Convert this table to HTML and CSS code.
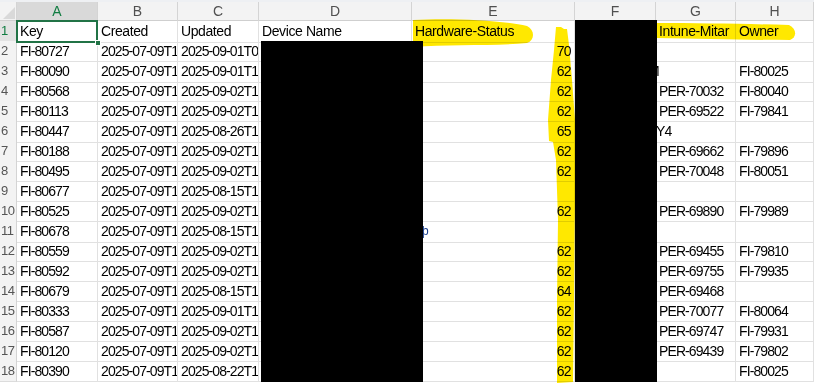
FILE: index.html
```html
<!DOCTYPE html>
<html>
<head>
<meta charset="utf-8">
<link rel="stylesheet" href="styles.css">
</head>
<body>
<div class="sheet">
  <div class="topband"></div>
  <div class="row colhead">
    <div class="corner"><svg width="17" height="19" viewBox="0 0 17 19"><polygon points="15,5 15,17 3,17" fill="#d9d9d9"/></svg></div>
    <div class="ch sel">A</div><div class="ch">B</div><div class="ch">C</div><div class="ch">D</div><div class="ch">E</div><div class="ch">F</div><div class="ch">G</div><div class="ch">H</div>
  </div>
  <div class="row head"><div class="rh sel">1</div><div class="c active">Key<span class="handle"></span></div><div class="c">Created</div><div class="c">Updated</div><div class="c">Device Name</div><div class="c">Hardware-Status</div><div class="c"></div><div class="c">Intune-Mitar</div><div class="c">Owner</div></div>
  <div class="row"><div class="rh">2</div><div class="c">FI-80727</div><div class="c">2025-07-09T1</div><div class="c">2025-09-01T0</div><div class="c"></div><div class="c num">70</div><div class="c"></div><div class="c"></div><div class="c"></div></div>
  <div class="row"><div class="rh">3</div><div class="c">FI-80090</div><div class="c">2025-07-09T1</div><div class="c">2025-09-01T1</div><div class="c"></div><div class="c num">62</div><div class="c"></div><div class="c shift-m">M</div><div class="c">FI-80025</div></div>
  <div class="row"><div class="rh">4</div><div class="c">FI-80568</div><div class="c">2025-07-09T1</div><div class="c">2025-09-02T1</div><div class="c"></div><div class="c num">62</div><div class="c"></div><div class="c">PER-70032</div><div class="c">FI-80040</div></div>
  <div class="row"><div class="rh">5</div><div class="c">FI-80113</div><div class="c">2025-07-09T1</div><div class="c">2025-09-02T1</div><div class="c"></div><div class="c num">62</div><div class="c"></div><div class="c">PER-69522</div><div class="c">FI-79841</div></div>
  <div class="row"><div class="rh">6</div><div class="c">FI-80447</div><div class="c">2025-07-09T1</div><div class="c">2025-08-26T1</div><div class="c"></div><div class="c num">65</div><div class="c"></div><div class="c shift-y">Y4</div><div class="c"></div></div>
  <div class="row"><div class="rh">7</div><div class="c">FI-80188</div><div class="c">2025-07-09T1</div><div class="c">2025-09-02T1</div><div class="c"></div><div class="c num">62</div><div class="c"></div><div class="c">PER-69662</div><div class="c">FI-79896</div></div>
  <div class="row"><div class="rh">8</div><div class="c">FI-80495</div><div class="c">2025-07-09T1</div><div class="c">2025-09-02T1</div><div class="c"></div><div class="c num">62</div><div class="c"></div><div class="c">PER-70048</div><div class="c">FI-80051</div></div>
  <div class="row"><div class="rh">9</div><div class="c">FI-80677</div><div class="c">2025-07-09T1</div><div class="c">2025-08-15T1</div><div class="c"></div><div class="c num"></div><div class="c"></div><div class="c"></div><div class="c"></div></div>
  <div class="row"><div class="rh">10</div><div class="c">FI-80525</div><div class="c">2025-07-09T1</div><div class="c">2025-09-02T1</div><div class="c"></div><div class="c num">62</div><div class="c"></div><div class="c">PER-69890</div><div class="c">FI-79989</div></div>
  <div class="row"><div class="rh">11</div><div class="c">FI-80678</div><div class="c">2025-07-09T1</div><div class="c">2025-08-15T1</div><div class="c"></div><div class="c spill">þ</div><div class="c"></div><div class="c"></div><div class="c"></div></div>
  <div class="row"><div class="rh">12</div><div class="c">FI-80559</div><div class="c">2025-07-09T1</div><div class="c">2025-09-02T1</div><div class="c"></div><div class="c num">62</div><div class="c"></div><div class="c">PER-69455</div><div class="c">FI-79810</div></div>
  <div class="row"><div class="rh">13</div><div class="c">FI-80592</div><div class="c">2025-07-09T1</div><div class="c">2025-09-02T1</div><div class="c"></div><div class="c num">62</div><div class="c"></div><div class="c">PER-69755</div><div class="c">FI-79935</div></div>
  <div class="row"><div class="rh">14</div><div class="c">FI-80679</div><div class="c">2025-07-09T1</div><div class="c">2025-08-15T1</div><div class="c"></div><div class="c num">64</div><div class="c"></div><div class="c">PER-69468</div><div class="c"></div></div>
  <div class="row"><div class="rh">15</div><div class="c">FI-80333</div><div class="c">2025-07-09T1</div><div class="c">2025-09-01T1</div><div class="c"></div><div class="c num">62</div><div class="c"></div><div class="c">PER-70077</div><div class="c">FI-80064</div></div>
  <div class="row"><div class="rh">16</div><div class="c">FI-80587</div><div class="c">2025-07-09T1</div><div class="c">2025-09-02T1</div><div class="c"></div><div class="c num">62</div><div class="c"></div><div class="c">PER-69747</div><div class="c">FI-79931</div></div>
  <div class="row"><div class="rh">17</div><div class="c">FI-80120</div><div class="c">2025-07-09T1</div><div class="c">2025-09-02T1</div><div class="c"></div><div class="c num">62</div><div class="c"></div><div class="c">PER-69439</div><div class="c">FI-79802</div></div>
  <div class="row"><div class="rh">18</div><div class="c">FI-80390</div><div class="c">2025-07-09T1</div><div class="c">2025-08-22T1</div><div class="c"></div><div class="c num">62</div><div class="c"></div><div class="c"></div><div class="c">FI-80025</div></div>

  <svg class="marker" width="814" height="385" viewBox="0 0 814 385">
    <g fill="#ffe800">
      <path d="M413,20 C450,18 500,20 527,26 C535,30 535,40 527,43 C495,46 450,44 413,47 Z"/>
      <path d="M656,23 C700,23 750,24 789,25 C797,29 797,37 790,40 C750,40 700,39 656,38 Z"/>
      <path d="M556,27 L561,27 L564,29 L567,29 L569,45 L572,80 L575,120 L575,200 L574,300 L573,382 L557,383 L557,300 L558,220 L556,160 L553,142 L549,141 L548,120 L551,80 L554,50 Z"/>
    </g>
  </svg>
  <div class="redact r-device"></div>
  <div class="redact r-col-f"></div>
</div>
</body>
</html>
```
FILE: styles.css
```css
* { box-sizing: border-box; }
html, body { margin: 0; padding: 0; background: #ffffff; }
body { width: 814px; height: 385px; overflow: hidden; }

.sheet {
  position: relative;
  width: 814px;
  height: 385px;
  overflow: hidden;
  font-family: "Liberation Sans", Arial, sans-serif;
  font-size: 14px;
  color: #000;
}

.topband { height: 2px; background: #eef0f3; }

.row {
  display: grid;
  grid-template-columns: 17px 81px 80px 81px 153px 163px 81px 80px 1fr;
  height: 20px;
}
.colhead { height: 19px; background: #f3f3f3; border-bottom: 1px solid #cfcfcf; }

.corner { border-right: 1px solid #d4d4d4; }
.corner svg { display: block; }

.ch {
  font-size: 14px;
  color: #505050;
  text-align: center;
  line-height: 18px;
  border-right: 1px solid #d4d4d4;
}
.ch.sel { background: #d9d9d9; color: #107c41; border-bottom: 2px solid #107c41; }

.rh {
  background: #f3f3f3;
  font-size: 13px;
  color: #555;
  line-height: 20px;
  padding-left: 1px;
  letter-spacing: -0.5px;
  border-right: 1px solid #d4d4d4;
  border-bottom: 1px solid #dcdcdc;
}
.rh.sel { background: #e3e3e3; color: #107c41; }

.c {
  position: relative;
  border-right: 1px solid #e1e1e1;
  border-bottom: 1px solid #e1e1e1;
  white-space: nowrap;
  overflow: hidden;
  line-height: 21px;
  padding-left: 3px;
  letter-spacing: -0.9px;
}
.head .c { letter-spacing: -0.4px; }
.c.num { text-align: right; padding-right: 3px; letter-spacing: -0.6px; }
.c.shift-m { overflow: visible; padding-left: 0; text-indent: -8px; }
.c.shift-y { overflow: visible; padding-left: 0; text-indent: 0; }
.c.spill { overflow: visible; padding-left: 0; text-indent: 10px; color: #1a3f8f; font-size: 12px; }

.c.active { overflow: visible; z-index: 3; }
.c.active::after {
  content: "";
  position: absolute;
  left: -1px; top: -1px; right: -1px; bottom: -1px;
  border: 2px solid #217346;
  pointer-events: none;
}
.handle {
  position: absolute;
  right: -4px; bottom: -4px;
  width: 6px; height: 6px;
  background: #217346;
  border: 1px solid #ffffff;
  z-index: 4;
}

.marker {
  position: absolute;
  left: 0; top: 0;
  mix-blend-mode: multiply;
  z-index: 5;
  pointer-events: none;
}

.redact { position: absolute; background: #000; z-index: 6; }
.r-device { left: 261px; top: 41px; width: 162px; height: 341px; }
.r-col-f { left: 575px; top: 20px; width: 82px; height: 362px; }
```
